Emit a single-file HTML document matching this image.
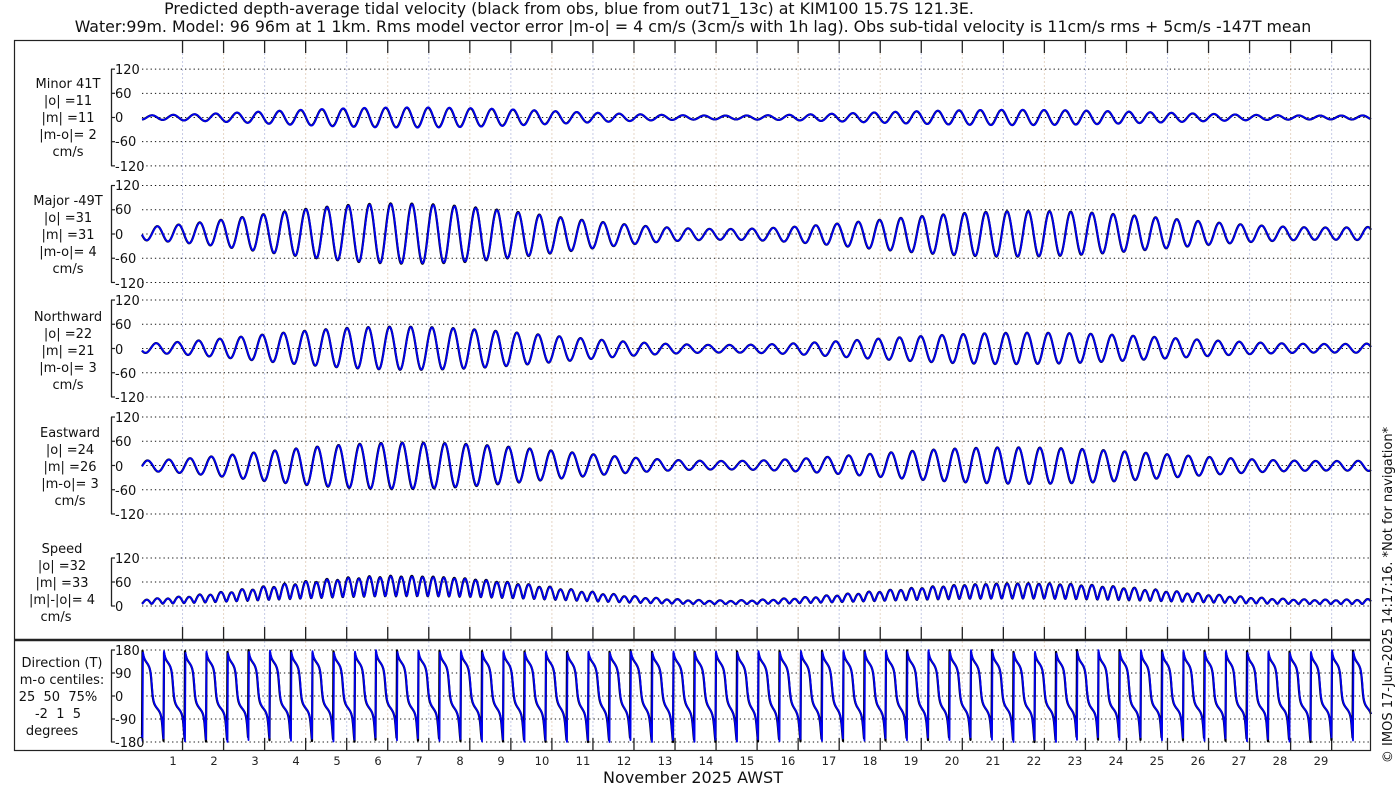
<!DOCTYPE html>
<html><head><meta charset="utf-8"><style>
html,body{margin:0;padding:0;background:#fff;width:1400px;height:800px;overflow:hidden}
svg{display:block;font-family:"DejaVu Sans","Liberation Sans",sans-serif}
</style></head><body>
<svg id="s" width="1400" height="800" viewBox="0 0 1400 800" xmlns="http://www.w3.org/2000/svg">
<g font-size="15.8" fill="#111" text-anchor="middle">
<text x="569" y="14">Predicted depth-average tidal velocity (black from obs, blue from out71_13c) at KIM100 15.7S 121.3E.</text>
<text x="693" y="32">Water:99m. Model: 96 96m at 1 1km. Rms model vector error |m-o| = 4 cm/s (3cm/s with 1h lag). Obs sub-tidal velocity is 11cm/s rms + 5cm/s -147T mean</text>
<text x="693" y="783" font-size="16">November 2025 AWST</text>
</g>
<text transform="translate(1392,595) rotate(-90)" font-size="13" text-anchor="middle" fill="#111">© IMOS 17-Jun-2025 14:17:16. *Not for navigation*</text>
<g id="grid"></g>
<g id="curves"></g>
<rect x="14.5" y="40.5" width="1356" height="710" fill="none" stroke="#222" stroke-width="1.2"/>
<line x1="14" y1="640" x2="1371" y2="640" stroke="#222" stroke-width="2.5"/>
<g font-size="13" fill="#111" text-anchor="middle">
<text x="68" y="88">Minor 41T</text><text x="68" y="105">|o| =11</text><text x="68" y="122">|m| =11</text><text x="68" y="139">|m-o|= 2</text><text x="68" y="156">cm/s</text>
<text x="68" y="205">Major -49T</text><text x="68" y="222">|o| =31</text><text x="68" y="239">|m| =31</text><text x="68" y="256">|m-o|= 4</text><text x="68" y="273">cm/s</text>
<text x="68" y="321">Northward</text><text x="68" y="338">|o| =22</text><text x="68" y="355">|m| =21</text><text x="68" y="372">|m-o|= 3</text><text x="68" y="389">cm/s</text>
<text x="70" y="437">Eastward</text><text x="70" y="454">|o| =24</text><text x="70" y="471">|m| =26</text><text x="70" y="488">|m-o|= 3</text><text x="70" y="505">cm/s</text>
<text x="62" y="553">Speed</text><text x="62" y="570">|o| =32</text><text x="62" y="587">|m| =33</text><text x="62" y="604">|m|-|o|= 4</text><text x="56" y="621">cm/s</text>
<text x="62" y="667">Direction (T)</text><text x="62" y="684">m-o centiles:</text><text x="58" y="701">25&#160; 50&#160; 75%</text><text x="58" y="718">-2&#160; 1&#160; 5</text><text x="52" y="735">degrees</text>
</g>
<g font-size="13" fill="#111">
<text x="115" y="74">120</text><text x="115" y="98">60</text><text x="115" y="122">0</text><text x="115" y="146">-60</text><text x="115" y="171">-120</text>
<text x="115" y="190">120</text><text x="115" y="214">60</text><text x="115" y="239">0</text><text x="115" y="263">-60</text><text x="115" y="288">-120</text>
<text x="115" y="305">120</text><text x="115" y="329">60</text><text x="115" y="354">0</text><text x="115" y="378">-60</text><text x="115" y="402">-120</text>
<text x="115" y="422">120</text><text x="115" y="446">60</text><text x="115" y="471">0</text><text x="115" y="495">-60</text><text x="115" y="519">-120</text>
<text x="115" y="563">120</text><text x="115" y="587">60</text><text x="115" y="611">0</text>
<text x="115" y="655">180</text><text x="115" y="678">90</text><text x="115" y="701">0</text><text x="115" y="724">-90</text><text x="115" y="747">-180</text>
</g>
<g font-size="11.5" fill="#222" text-anchor="middle">
<text x="173" y="765">1</text><text x="214" y="765">2</text><text x="255" y="765">3</text><text x="296" y="765">4</text><text x="337" y="765">5</text><text x="378" y="765">6</text><text x="419" y="765">7</text><text x="460" y="765">8</text><text x="501" y="765">9</text><text x="542" y="765">10</text><text x="583" y="765">11</text><text x="624" y="765">12</text><text x="665" y="765">13</text><text x="706" y="765">14</text><text x="747" y="765">15</text><text x="788" y="765">16</text><text x="829" y="765">17</text><text x="870" y="765">18</text><text x="911" y="765">19</text><text x="952" y="765">20</text><text x="993" y="765">21</text><text x="1034" y="765">22</text><text x="1075" y="765">23</text><text x="1116" y="765">24</text><text x="1157" y="765">25</text><text x="1198" y="765">26</text><text x="1239" y="765">27</text><text x="1280" y="765">28</text><text x="1321" y="765">29</text>
</g>
</svg>
<script>
(function(){
var NS="http://www.w3.org/2000/svg";
var grid=document.getElementById("grid"),cur=document.getElementById("curves");
function el(p,n,a){var e=document.createElementNS(NS,n);for(var k in a)e.setAttribute(k,a[k]);p.appendChild(e);return e;}
var X0=141.5,DX=41.04,XR=1371;
var P=[[117.5,0.403,[120,60,0,-60,-120]],[234,0.404,[120,60,0,-60,-120]],[348.5,0.404,[120,60,0,-60,-120]],[465.5,0.404,[120,60,0,-60,-120]],[606,0.4,[120,60,0]],[696,0.2556,[180,90,0,-90,-180]]];
for(var d=1;d<=29;d++){var x=X0+DX*d;
 el(grid,"line",{x1:x,y1:53,x2:x,y2:751,stroke:(d%2?"#c6cbe6":"#e6d6c6"),"stroke-width":1,"stroke-dasharray":"2,2"});
 [[40,53],[627,640],[738,751]].forEach(function(t){el(grid,"line",{x1:x,y1:t[0],x2:x,y2:t[1],stroke:"#222","stroke-width":1.3});});
}
P.forEach(function(p){
 var ys=p[2].map(function(v){return p[0]-v*p[1];});
 el(grid,"line",{x1:111.5,y1:Math.min.apply(0,ys),x2:111.5,y2:Math.max.apply(0,ys),stroke:"#222","stroke-width":1.3});
 ys.forEach(function(y){el(grid,"line",{x1:111,y1:y,x2:115,y2:y,stroke:"#222","stroke-width":1.2});
  el(grid,"line",{x1:142,y1:y,x2:XR,y2:y,stroke:"#111","stroke-width":1,"stroke-dasharray":"1.3,3"});});
});
var f=1.9323,fsn=1/14.77;
function comp(d,obs){
 var g=0.5+0.5*Math.cos(2*Math.PI*(d-6.8)*fsn);
 var A=(14+58*g*(1-0.02*(d-6.8)));
 var th=2*Math.PI*f*d+Math.PI/2+(obs?0.06:0);
 var di=0.13*Math.cos(2*Math.PI*1.0027*d+0.7);
 var M=A*(Math.cos(th)+di*Math.cos(th*0.5))*(obs?1.02:1);
 var m=-0.35*A*Math.sin(th)*(obs?0.97:1);
 var r=Math.PI/180,ua=-49*r,va=41*r;
 var E=M*Math.sin(ua)+m*Math.sin(va),N=M*Math.cos(ua)+m*Math.cos(va);
 var S=Math.sqrt(E*E+N*N),D=Math.atan2(E,N)/r;
 return [m,M,N,E,S,D];
}
[true,false].forEach(function(obs){
 var col=obs?"#000":"#0000ee";
 var pts=[[],[],[],[],[],[]];
 for(var x=142;x<=XR;x+=0.5){var d=(x-X0)/DX;var v=comp(d,obs);
  for(var i=0;i<6;i++)pts[i].push(x.toFixed(1)+","+(P[i][0]-v[i]*P[i][1]).toFixed(1));}
 for(var i=0;i<6;i++)el(cur,"polyline",{points:pts[i].join(" "),fill:"none",stroke:col,"stroke-width":obs?2.2:1.8,"stroke-linejoin":"round"});
});
})();
</script>
</body></html>
